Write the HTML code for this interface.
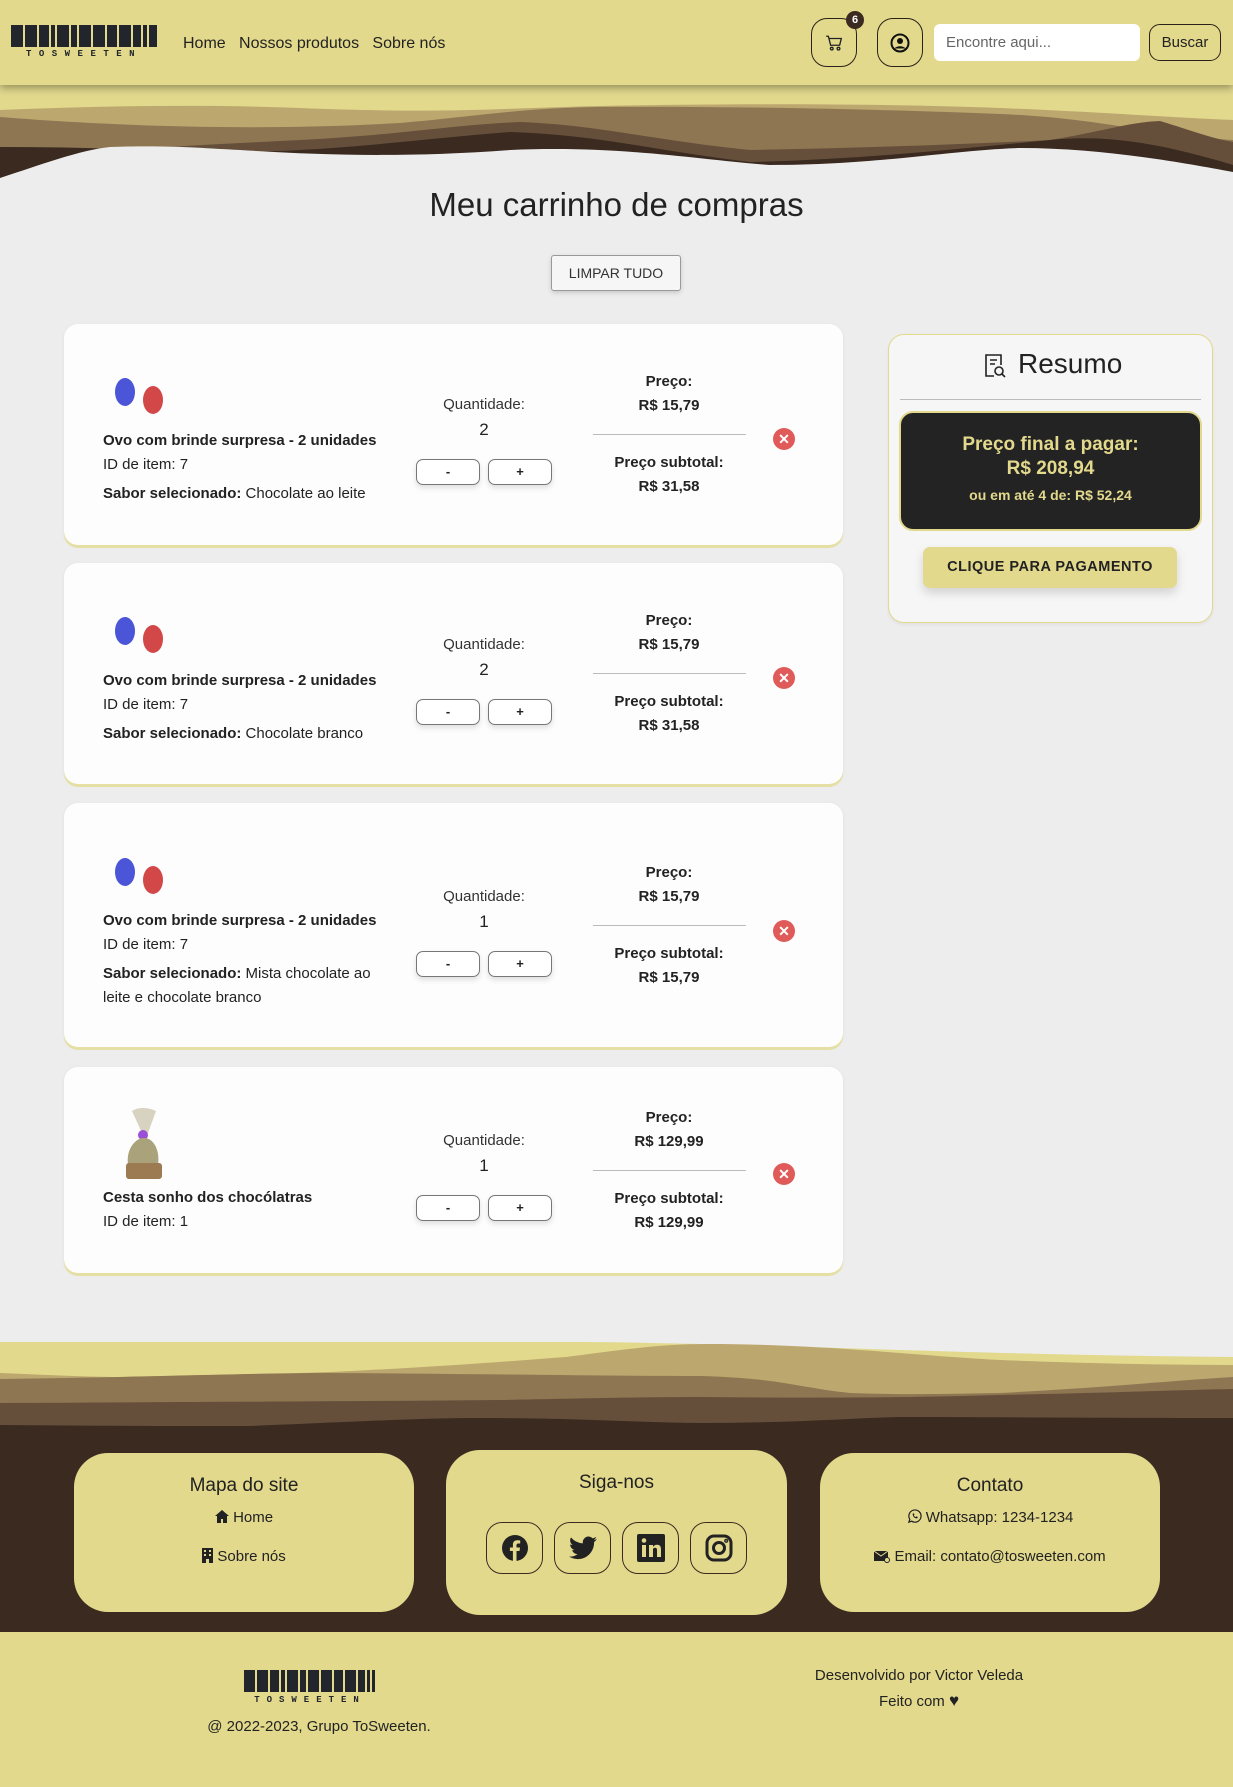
<!DOCTYPE html>
<html><head><meta charset="utf-8">
<style>
*{margin:0;padding:0;box-sizing:border-box}
body{width:1233px;height:1787px;background:#ededed;font-family:"Liberation Sans",sans-serif;color:#222;position:relative;overflow:hidden}
.a{position:absolute}
.c{text-align:center}
.card{position:absolute;left:64px;width:779px;background:#fdfdfd;border-radius:14px;box-shadow:0 3px 0 #e6dfa4,0 1px 4px rgba(0,0,0,.06)}
.t{position:absolute;font-size:15px;line-height:20px;white-space:nowrap}
.b{font-weight:bold}
.qb{position:absolute;width:64px;height:26px;border:1px solid #777;border-radius:7px;background:#fff;font-size:13px;font-weight:bold;text-align:center;line-height:23px;box-shadow:0 3px 6px rgba(0,0,0,.12)}
.hr{position:absolute;height:1px;background:#bbb}
.x{position:absolute;width:22px;height:22px;border-radius:50%;background:#e05a5a;color:#fff;font-size:14px;font-weight:bold;text-align:center;line-height:22px}
.fb{position:absolute;background:#e2d98d;border-radius:34px}
.sb{position:absolute;width:57px;height:52px;border:1px solid #3b2a20;border-radius:16px;display:flex;align-items:center;justify-content:center}
</style></head><body>

<!-- header wave -->
<svg class="a" style="left:0;top:0" width="1233" height="190">
<rect width="1233" height="190" fill="#e2d98d"/>
<path d="M0 110 C100 106 200 104 300 108 C450 114 500 108 600 106 C750 103 900 104 1000 108 C1100 112 1180 118 1233 120 V190 H0Z" fill="#bca76f"/>
<path d="M0 117 C100 125 250 132 400 123 C480 116 520 108 600 107 C750 106 900 110 1000 114 C1100 118 1150 135 1233 140 V190 H0Z" fill="#8e7652"/>
<path d="M0 160 C100 150 200 145 300 140 C400 135 450 125 520 122 C600 125 650 140 750 150 C850 148 950 145 1050 140 C1100 132 1130 122 1160 121 C1190 130 1210 138 1233 142 V190 H0Z" fill="#654f3b"/>
<path d="M0 147 C50 147 100 148 150 150 C300 158 400 140 510 132 C600 135 650 150 750 162 C850 160 950 150 1050 140 C1100 135 1150 140 1233 165 V190 H0Z" fill="#3b2a20"/>
<path d="M0 178 C40 165 80 150 110 147 C170 145 200 148 240 150 C320 155 400 158 510 150 C620 145 700 160 770 165 C880 165 950 150 1020 148 C1100 148 1180 162 1233 172 V190 H0Z" fill="#ededed"/>
</svg>

<!-- header -->
<div class="a" style="left:0;top:0;width:1233px;height:85px;background:#e2d98d;box-shadow:0 3px 8px rgba(0,0,0,.35);z-index:2"></div>
<svg class="a" style="left:0;top:0;z-index:3" width="160" height="60">
<g fill="#22252c">
<rect x="11" y="25" width="12" height="22"/><rect x="25" y="25" width="12" height="22"/><rect x="39" y="25" width="10" height="22"/><rect x="51" y="25" width="4" height="22"/><rect x="57" y="25" width="12" height="22"/><rect x="71" y="25" width="6" height="22"/><rect x="79" y="25" width="12" height="22"/><rect x="93" y="25" width="12" height="22"/><rect x="107" y="25" width="10" height="22"/><rect x="119" y="25" width="12" height="22"/><rect x="133" y="25" width="8" height="22"/><rect x="143" y="25" width="4" height="22"/><rect x="149" y="25" width="8" height="22"/>
</g>
<text x="84" y="56" font-family="Liberation Mono,monospace" font-weight="bold" font-size="9" fill="#22252c" text-anchor="middle" letter-spacing="7.5">TOSWEETEN</text>
</svg>
<div class="a" style="left:183px;top:35px;font-size:16px;z-index:3;color:#222">Home&nbsp;&nbsp;&nbsp;Nossos produtos&nbsp;&nbsp;&nbsp;Sobre nós</div>
<div class="a" style="left:811px;top:18px;width:46px;height:49px;border:1px solid #2a2118;border-radius:16px;z-index:3;display:flex;align-items:center;justify-content:center">
<svg width="18" height="18" viewBox="0 0 16 16" fill="none" stroke="#222" stroke-width="1.2"><path d="M1 2h2l2 8h8l1.5-6H4"/><circle cx="6" cy="13" r="1.2"/><circle cx="12" cy="13" r="1.2"/></svg></div>
<div class="a" style="left:846px;top:11px;width:18px;height:18px;border-radius:50%;background:#3b2a20;color:#fff;font-size:11px;font-weight:bold;text-align:center;line-height:18px;z-index:4">6</div>
<div class="a" style="left:877px;top:18px;width:46px;height:49px;border:1px solid #2a2118;border-radius:16px;z-index:3;display:flex;align-items:center;justify-content:center">
<svg width="20" height="20" viewBox="0 0 20 20"><circle cx="10" cy="10" r="8.5" fill="none" stroke="#111" stroke-width="2"/><circle cx="10" cy="8" r="3" fill="#111"/><path d="M4.5 15.5c2-3 9-3 11 0" fill="#111"/></svg></div>
<div class="a" style="left:934px;top:24px;width:206px;height:37px;background:#fff;border-radius:6px;z-index:3;font-size:15px;color:#666;padding:10px 12px">Encontre aqui...</div>
<div class="a" style="left:1149px;top:24px;width:72px;height:37px;border:1px solid #2a2118;border-radius:11px;z-index:3;font-size:15px;text-align:center;line-height:35px">Buscar</div>

<div class="a c" style="left:0;width:1233px;top:186px;font-size:33px;color:#222">Meu carrinho de compras</div>
<div class="a" style="left:551px;top:255px;width:130px;height:36px;border:1px solid #999;border-radius:3px;background:#f6f6f6;font-size:14px;text-align:center;line-height:34px;color:#333;box-shadow:0 2px 5px rgba(0,0,0,.15)">LIMPAR TUDO</div>

<div class="card" style="top:324px;height:221px"></div>
<div class="card" style="top:563px;height:221px"></div>
<div class="card" style="top:803px;height:244px"></div>
<div class="card" style="top:1067px;height:206px"></div>

<!-- card 1 -->
<svg class="a" style="left:103px;top:362px" width="80" height="60"><ellipse cx="22" cy="30" rx="10" ry="14" fill="#4a55d8"/><ellipse cx="50" cy="38" rx="10" ry="14" fill="#d24848"/></svg>
<div class="t b" style="left:103px;top:431px">Ovo com brinde surpresa - 2 unidades</div>
<div class="t" style="left:103px;top:455px">ID de item: 7</div>
<div class="t" style="left:103px;top:484px"><b>Sabor selecionado:</b> Chocolate ao leite</div>
<div class="t c" style="left:404px;width:160px;top:395px;color:#333">Quantidade:</div>
<div class="t c" style="left:404px;width:160px;top:420px;font-size:17px">2</div>
<div class="qb" style="left:416px;top:459px">-</div><div class="qb" style="left:488px;top:459px">+</div>
<div class="t c b" style="left:589px;width:160px;top:372px">Preço:</div>
<div class="t c b" style="left:589px;width:160px;top:396px">R$ 15,79</div>
<div class="hr" style="left:593px;width:153px;top:434px"></div>
<div class="t c b" style="left:589px;width:160px;top:453px">Preço subtotal:</div>
<div class="t c b" style="left:589px;width:160px;top:477px">R$ 31,58</div>
<div class="x" style="left:773px;top:428px">✕</div>

<!-- card 2 -->
<svg class="a" style="left:103px;top:601px" width="80" height="60"><ellipse cx="22" cy="30" rx="10" ry="14" fill="#4a55d8"/><ellipse cx="50" cy="38" rx="10" ry="14" fill="#d24848"/></svg>
<div class="t b" style="left:103px;top:671px">Ovo com brinde surpresa - 2 unidades</div>
<div class="t" style="left:103px;top:695px">ID de item: 7</div>
<div class="t" style="left:103px;top:724px"><b>Sabor selecionado:</b> Chocolate branco</div>
<div class="t c" style="left:404px;width:160px;top:635px;color:#333">Quantidade:</div>
<div class="t c" style="left:404px;width:160px;top:660px;font-size:17px">2</div>
<div class="qb" style="left:416px;top:699px">-</div><div class="qb" style="left:488px;top:699px">+</div>
<div class="t c b" style="left:589px;width:160px;top:611px">Preço:</div>
<div class="t c b" style="left:589px;width:160px;top:635px">R$ 15,79</div>
<div class="hr" style="left:593px;width:153px;top:673px"></div>
<div class="t c b" style="left:589px;width:160px;top:692px">Preço subtotal:</div>
<div class="t c b" style="left:589px;width:160px;top:716px">R$ 31,58</div>
<div class="x" style="left:773px;top:667px">✕</div>

<!-- card 3 -->
<svg class="a" style="left:103px;top:842px" width="80" height="60"><ellipse cx="22" cy="30" rx="10" ry="14" fill="#4a55d8"/><ellipse cx="50" cy="38" rx="10" ry="14" fill="#d24848"/></svg>
<div class="t b" style="left:103px;top:911px">Ovo com brinde surpresa - 2 unidades</div>
<div class="t" style="left:103px;top:935px">ID de item: 7</div>
<div class="t" style="left:103px;top:964px"><b>Sabor selecionado:</b> Mista chocolate ao</div>
<div class="t" style="left:103px;top:988px">leite e chocolate branco</div>
<div class="t c" style="left:404px;width:160px;top:887px;color:#333">Quantidade:</div>
<div class="t c" style="left:404px;width:160px;top:912px;font-size:17px">1</div>
<div class="qb" style="left:416px;top:951px">-</div><div class="qb" style="left:488px;top:951px">+</div>
<div class="t c b" style="left:589px;width:160px;top:863px">Preço:</div>
<div class="t c b" style="left:589px;width:160px;top:887px">R$ 15,79</div>
<div class="hr" style="left:593px;width:153px;top:925px"></div>
<div class="t c b" style="left:589px;width:160px;top:944px">Preço subtotal:</div>
<div class="t c b" style="left:589px;width:160px;top:968px">R$ 15,79</div>
<div class="x" style="left:773px;top:920px">✕</div>

<!-- card 4 -->
<svg class="a" style="left:118px;top:1105px" width="50" height="78"><path d="M14 6l10 22h6L38 6C30 2 20 2 14 6z" fill="#d8d2c0"/><circle cx="25" cy="30" r="5" fill="#9b4fd6"/><path d="M10 60C8 45 16 35 24 33h4c8 2 14 12 12 27z" fill="#a9a27a"/><rect x="8" y="58" width="36" height="16" rx="3" fill="#9c7a52"/></svg>
<div class="t b" style="left:103px;top:1188px">Cesta sonho dos chocólatras</div>
<div class="t" style="left:103px;top:1212px">ID de item: 1</div>
<div class="t c" style="left:404px;width:160px;top:1131px;color:#333">Quantidade:</div>
<div class="t c" style="left:404px;width:160px;top:1156px;font-size:17px">1</div>
<div class="qb" style="left:416px;top:1195px">-</div><div class="qb" style="left:488px;top:1195px">+</div>
<div class="t c b" style="left:589px;width:160px;top:1108px">Preço:</div>
<div class="t c b" style="left:589px;width:160px;top:1132px">R$ 129,99</div>
<div class="hr" style="left:593px;width:153px;top:1170px"></div>
<div class="t c b" style="left:589px;width:160px;top:1189px">Preço subtotal:</div>
<div class="t c b" style="left:589px;width:160px;top:1213px">R$ 129,99</div>
<div class="x" style="left:773px;top:1163px">✕</div>

<!-- resumo -->
<div class="a" style="left:888px;top:334px;width:325px;height:289px;background:#f6f6f6;border-radius:16px;border:1px solid #e2d98d;box-shadow:0 2px 3px rgba(0,0,0,.05)"></div>
<svg class="a" style="left:984px;top:353px" width="22" height="26" viewBox="0 0 22 26" fill="none" stroke="#222" stroke-width="1.6"><path d="M10 23H2V2h15v10"/><path d="M6 7h7M6 11h5"/><circle cx="15" cy="18" r="4"/><path d="M18 21l3 3"/></svg>
<div class="a" style="left:1018px;top:348px;font-size:28px;color:#222">Resumo</div>
<div class="hr" style="left:900px;width:301px;top:399px"></div>
<div class="a c" style="left:899px;top:411px;width:303px;height:120px;background:#232323;border:2px solid #e2d98d;border-radius:14px;color:#e2d98d;font-weight:bold">
<div style="font-size:19px;margin-top:20px;line-height:24px">Preço final a pagar:</div>
<div style="font-size:19px;line-height:24px">R$ 208,94</div>
<div style="font-size:14px;margin-top:6px">ou em até 4 de: R$ 52,24</div></div>
<div class="a c" style="left:923px;top:547px;width:254px;height:41px;background:#e2d98d;border-radius:7px;font-size:14.5px;font-weight:bold;line-height:41px;letter-spacing:.5px;color:#222;box-shadow:0 5px 10px rgba(0,0,0,.15)">CLIQUE PARA PAGAMENTO</div>

<!-- footer wave -->
<div class="a" style="left:0;top:1420px;width:1233px;height:212px;background:#3b2a20"></div>
<svg class="a" style="left:0;top:1338px" width="1233" height="120">
<path d="M0 4 H566 C640 4 680 6 708 6 C800 8 1000 17 1233 19 V120 H0Z" fill="#e2d98d"/>
<path d="M0 35 C50 37 90 39 118 39 C200 38 280 36 330 34 C420 30 500 24 566 19 C620 12 660 6 708 6 C780 6 850 11 900 15 C950 19 980 21 1000 22 C1100 26 1180 27 1233 27 V120H0Z" fill="#bca76f"/>
<path d="M0 41 C150 39 250 35 330 35 C500 36 600 38 700 38 C780 40 800 50 850 55 C900 57 950 56 1000 55 C1100 50 1180 42 1233 39 V120H0Z" fill="#8e7652"/>
<path d="M0 65 C200 64 400 63 500 62 C600 60 650 59 700 59 C800 60 900 60 1000 57 C1100 55 1180 52 1233 51 V120H0Z" fill="#654f3b"/>
<path d="M0 87 C100 88 200 88 250 88 C350 84 420 80 480 80 C580 80 650 85 700 85 C800 85 850 80 900 79 C1000 79 1100 80 1233 80 V120H0Z" fill="#3b2a20"/>
</svg>

<!-- footer boxes -->
<div class="fb" style="left:74px;top:1453px;width:340px;height:159px"></div>
<div class="fb" style="left:446px;top:1450px;width:341px;height:165px"></div>
<div class="fb" style="left:820px;top:1453px;width:340px;height:159px"></div>
<div class="a c" style="left:74px;width:340px;top:1475px;font-size:19px">Mapa do site</div>
<div class="a c" style="left:74px;width:340px;top:1509px;font-size:15px"><svg width="14" height="13" viewBox="0 0 14 13" style="vertical-align:-1px"><path d="M7 0L0 6h2v7h4V9h2v4h4V6h2z" fill="#222"/></svg> Home</div>
<div class="a c" style="left:74px;width:340px;top:1548px;font-size:15px"><svg width="11" height="15" viewBox="0 0 11 15" style="vertical-align:-2px"><rect width="11" height="15" fill="#222"/><g fill="#e2d98d"><rect x="2" y="2" width="2" height="2"/><rect x="7" y="2" width="2" height="2"/><rect x="2" y="6" width="2" height="2"/><rect x="7" y="6" width="2" height="2"/><rect x="4" y="11" width="3" height="4"/></g></svg> Sobre nós</div>
<div class="a c" style="left:446px;width:341px;top:1472px;font-size:19px">Siga-nos</div>
<div class="sb" style="left:486px;top:1522px"><svg width="28" height="28" viewBox="0 0 28 28"><circle cx="14" cy="14" r="13" fill="#222"/><path d="M15.5 27V17h3l.5-3.5h-3.5v-2.2c0-1 .4-1.8 1.8-1.8h1.9V6.4c-.4 0-1.6-.2-2.9-.2-2.8 0-4.4 1.6-4.4 4.6v2.7h-3V17h3v10z" fill="#e2d98d"/></svg></div>
<div class="sb" style="left:554px;top:1522px"><svg width="28" height="24" viewBox="0 0 24 20"><path d="M24 2.4c-.9.4-1.8.6-2.8.8 1-.6 1.8-1.6 2.2-2.7-1 .6-2 1-3.1 1.2A4.9 4.9 0 0 0 11.9 6 14 14 0 0 1 1.7.9a4.9 4.9 0 0 0 1.5 6.6c-.8 0-1.6-.3-2.2-.6 0 2.4 1.700 4.4 3.9 4.8-.7.2-1.5.2-2.2.1.6 2 2.4 3.4 4.6 3.4A9.9 9.9 0 0 1 0 17.3 14 14 0 0 0 7.5 19.5c9 0 14-7.5 14-14v-.6c1-.7 1.8-1.6 2.500-2.5z" fill="#222"/></svg></div>
<div class="sb" style="left:622px;top:1522px"><svg width="28" height="28" viewBox="0 0 28 28"><rect width="28" height="28" rx="2" fill="#222"/><rect x="5" y="11" width="4" height="12" fill="#e2d98d"/><circle cx="7" cy="6.5" r="2.3" fill="#e2d98d"/><path d="M12 11h4v2c.7-1.3 2.2-2.3 4-2.3 3.5 0 4 2.3 4 5.3v7h-4v-6.2c0-1.5 0-3-2-3s-2 1.5-2 3V23h-4z" fill="#e2d98d"/></svg></div>
<div class="sb" style="left:690px;top:1522px"><svg width="28" height="28" viewBox="0 0 28 28" fill="none" stroke="#222" stroke-width="3"><rect x="2" y="2" width="24" height="24" rx="7"/><circle cx="14" cy="14" r="5.5"/><circle cx="21.2" cy="6.8" r=".6" fill="#222"/></svg></div>
<div class="a c" style="left:820px;width:340px;top:1475px;font-size:19px">Contato</div>
<div class="a c" style="left:820px;width:340px;top:1509px;font-size:15px"><svg width="15" height="15" viewBox="0 0 16 16" style="vertical-align:-2px"><path d="M2 14l1-3A6.5 6.5 0 1 1 5 13z" fill="none" stroke="#222" stroke-width="1.3"/><path d="M6 5c0 3 2 5 5 5l.5-1.5-1.5-.7-.7.7C8 8 7.5 7.5 7.3 6.6l.7-.7L7.3 4.5z" fill="#222"/></svg> Whatsapp: 1234-1234</div>
<div class="a c" style="left:820px;width:340px;top:1548px;font-size:15px"><svg width="16" height="14" viewBox="0 0 16 14" style="vertical-align:-2px"><rect x="0" y="2" width="14" height="10" fill="#222"/><path d="M0 2l7 5 7-5" stroke="#e2d98d" fill="none"/><circle cx="13" cy="11" r="2.5" fill="#e2d98d" stroke="#222"/></svg> Email: contato@tosweeten.com</div>

<!-- bottom -->
<div class="a" style="left:0;top:1632px;width:1233px;height:155px;background:#e2d98d"></div>
<svg class="a" style="left:244px;top:1670px" width="150" height="36">
<g fill="#22252c">
<rect x="0" y="0" width="11" height="22"/><rect x="13" y="0" width="11" height="22"/><rect x="26" y="0" width="9" height="22"/><rect x="37" y="0" width="4" height="22"/><rect x="43" y="0" width="11" height="22"/><rect x="56" y="0" width="6" height="22"/><rect x="64" y="0" width="11" height="22"/><rect x="77" y="0" width="11" height="22"/><rect x="90" y="0" width="9" height="22"/><rect x="101" y="0" width="11" height="22"/><rect x="114" y="0" width="7" height="22"/><rect x="123" y="0" width="3" height="22"/><rect x="128" y="0" width="3" height="22"/>
</g>
<text x="66" y="32" font-family="Liberation Mono,monospace" font-weight="bold" font-size="9" fill="#22252c" text-anchor="middle" letter-spacing="7">TOSWEETEN</text>
</svg>
<div class="a c" style="left:119px;width:400px;top:1718px;font-size:15px">@ 2022-2023, Grupo ToSweeten.</div>
<div class="a c" style="left:719px;width:400px;top:1667px;font-size:15px">Desenvolvido por Victor Veleda</div>
<div class="a c" style="left:719px;width:400px;top:1691px;font-size:15px">Feito com <span style="font-size:17px">♥</span></div>
</body></html>
